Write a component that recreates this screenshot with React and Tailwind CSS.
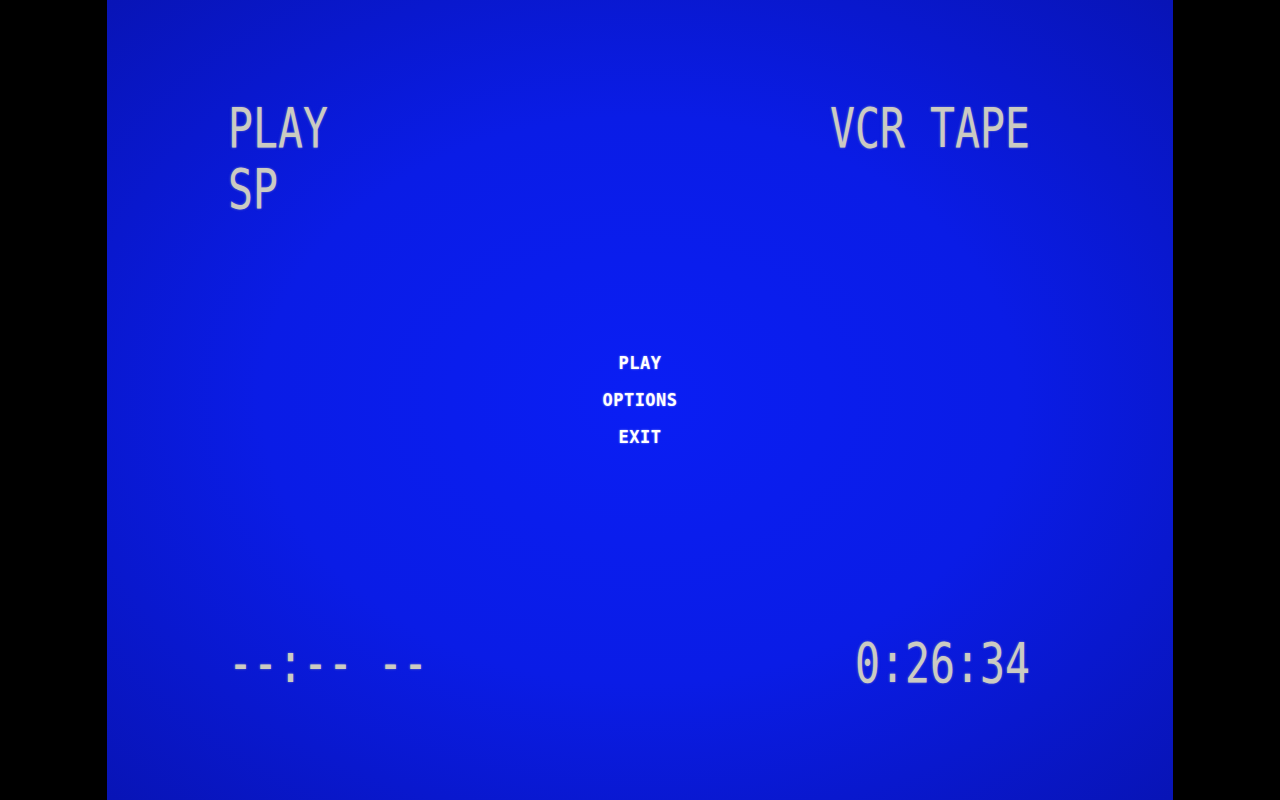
import React from "react";

const osd = { fontFamily: '"DejaVu Sans Mono", "Liberation Mono", monospace' };

// Tall, narrow on-screen-display text of a VCR
function Osd({ children }) {
  return (
    <div className="h-[56px] leading-none">
      <span
        className="inline-block origin-top-left scale-y-[1.32] text-[41.5px] leading-none text-[#cbcbc2] [text-shadow:0_0_2px_rgba(220,220,200,0.5)] whitespace-pre"
        style={osd}
      >
        {children}
      </span>
    </div>
  );
}

function MenuItem({ children }) {
  return (
    <div
      className="text-[17px] font-bold leading-none text-white [text-shadow:0_0_2px_rgba(255,255,255,0.6)] tracking-[0.5px]"
      style={osd}
    >
      {children}
    </div>
  );
}

export default function App() {
  return (
    <div className="flex h-[800px] w-full justify-center bg-black">
      <div className="flex h-[800px] w-[1066px] flex-col bg-[radial-gradient(ellipse_at_center,#0a1ef4_0%,#0a1ce6_50%,#0814b6_100%)] pl-[121px] pr-[143px] pt-[101px]">
        <div className="flex justify-between">
          <div className="flex flex-col gap-[5px]">
            <Osd>PLAY</Osd>
            <Osd>SP</Osd>
          </div>
          <Osd>VCR TAPE</Osd>
        </div>
        <div className="mt-[137px] flex translate-x-[11px] flex-col items-center gap-[20px]">
          <MenuItem>PLAY</MenuItem>
          <MenuItem>OPTIONS</MenuItem>
          <MenuItem>EXIT</MenuItem>
        </div>
        <div className="mt-[190px] flex justify-between">
          <Osd>--:-- --</Osd>
          <Osd>0:26:34</Osd>
        </div>
      </div>
    </div>
  );
}
